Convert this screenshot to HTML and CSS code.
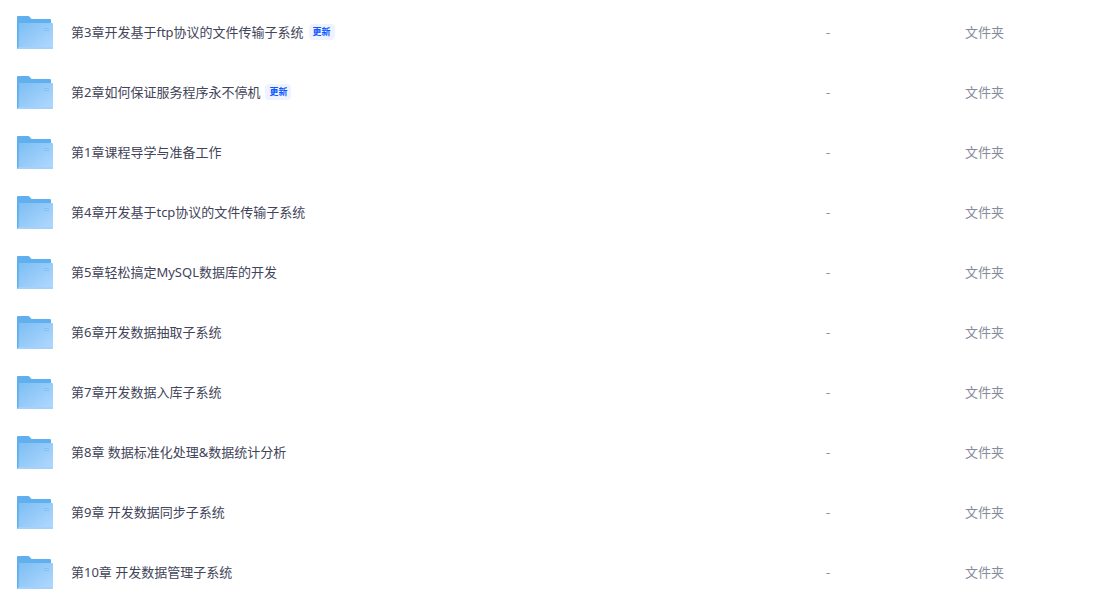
FILE: index.html
```
<!DOCTYPE html>
<html lang="zh-CN">
<head>
    <meta charset="UTF-8">
    <meta name="viewport" content="width=device-width, initial-scale=1.0">
    <title>文件列表</title>
    <link rel="stylesheet" href="styles.css">
</head>
<body>
    <svg class="symbols" aria-hidden="true">
        <defs>
            <linearGradient id="front" x1="0" y1="0" x2="1" y2="1">
                <stop offset="0" stop-color="#7cbef3"/>
                <stop offset="1" stop-color="#b2d9ff"/>
            </linearGradient>
            <symbol id="folder" viewBox="0 0 36 33">
                <path fill="#60afee" d="M0 1Q0 0 1 0H11Q12 0 12.600 .7L14.500 3H33Q34 3 34 4V32L1 33Q0 33 0 32Z"/>
                <path fill="url(#front)" d="M2 7H35Q36 7 36 8V32Q36 33 35 33H1Q1.500 32 1.500 31Z"/>
                <path fill="#a5d1fb" d="M1.500 31H36V32Q36 33 35 33H1Q1.500 32 1.500 31Z"/>
                <path fill="#80c1f6" d="M27 12H32V13H27ZM27 14H32V15H27Z"/>
            </symbol>
        </defs>
    </svg>

    <table class="file-list">
        <colgroup>
            <col>
            <col class="col-size">
            <col class="col-type">
        </colgroup>
        <tbody>
            <tr>
                <td><div class="name"><svg class="icon"><use href="#folder"/></svg><a href="#">第3章开发基于ftp协议的文件传输子系统</a><span class="tag">更新</span></div></td>
                <td>-</td>
                <td>文件夹</td>
            </tr>
            <tr>
                <td><div class="name"><svg class="icon"><use href="#folder"/></svg><a href="#">第2章如何保证服务程序永不停机</a><span class="tag">更新</span></div></td>
                <td>-</td>
                <td>文件夹</td>
            </tr>
            <tr>
                <td><div class="name"><svg class="icon"><use href="#folder"/></svg><a href="#">第1章课程导学与准备工作</a></div></td>
                <td>-</td>
                <td>文件夹</td>
            </tr>
            <tr>
                <td><div class="name"><svg class="icon"><use href="#folder"/></svg><a href="#">第4章开发基于tcp协议的文件传输子系统</a></div></td>
                <td>-</td>
                <td>文件夹</td>
            </tr>
            <tr>
                <td><div class="name"><svg class="icon"><use href="#folder"/></svg><a href="#">第5章轻松搞定MySQL数据库的开发</a></div></td>
                <td>-</td>
                <td>文件夹</td>
            </tr>
            <tr>
                <td><div class="name"><svg class="icon"><use href="#folder"/></svg><a href="#">第6章开发数据抽取子系统</a></div></td>
                <td>-</td>
                <td>文件夹</td>
            </tr>
            <tr>
                <td><div class="name"><svg class="icon"><use href="#folder"/></svg><a href="#">第7章开发数据入库子系统</a></div></td>
                <td>-</td>
                <td>文件夹</td>
            </tr>
            <tr>
                <td><div class="name"><svg class="icon"><use href="#folder"/></svg><a href="#">第8章 数据标准化处理&amp;数据统计分析</a></div></td>
                <td>-</td>
                <td>文件夹</td>
            </tr>
            <tr>
                <td><div class="name"><svg class="icon"><use href="#folder"/></svg><a href="#">第9章 开发数据同步子系统</a></div></td>
                <td>-</td>
                <td>文件夹</td>
            </tr>
            <tr>
                <td><div class="name"><svg class="icon"><use href="#folder"/></svg><a href="#">第10章 开发数据管理子系统</a></div></td>
                <td>-</td>
                <td>文件夹</td>
            </tr>
        </tbody>
    </table>
</body>
</html>
```
FILE: styles.css
```
body {
    margin: 0;
    padding-top: 2px;
    font-family: "Noto Sans", "Noto Sans CJK SC", sans-serif;
    font-size: 13px;
    line-height: 20px;
    color: #878c9c;
    background-color: #fff;
}
.symbols {
    position: absolute;
    width: 0;
    height: 0;
}
.file-list {
    width: 100%;
    border-collapse: collapse;
    table-layout: fixed;
}
.file-list td {
    height: 60px;
    padding: 0;
}
.col-size,
.col-type {
    width: 139px;
}
.name {
    display: flex;
    align-items: center;
    padding-left: 17px;
}
.icon {
    flex: none;
    width: 36px;
    height: 33px;
    margin-right: 18px;
}
.name a {
    color: #424459;
    text-decoration: none;
}
.name a:hover {
    color: #06a7ff;
}
.tag {
    margin-left: 5px;
    padding: 0 4px;
    border-radius: 4px;
    font-size: 9px;
    font-weight: bold;
    line-height: 16px;
    color: #0f58ff;
    background-color: #eef3ff;
}
```
